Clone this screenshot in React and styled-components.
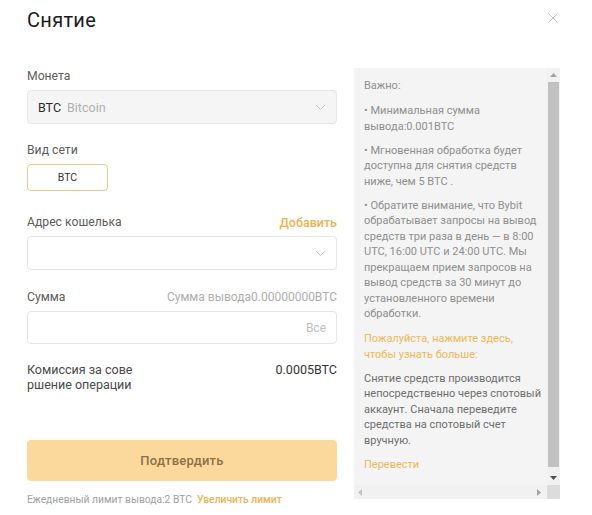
import React from "react";
import styled, { createGlobalStyle } from "styled-components";

const Global = createGlobalStyle`
  html, body {
    margin: 0;
    padding: 0;
    background: #fff;
  }
  body {
    font-family: Roboto, "Noto Sans", Arial, sans-serif;
    -webkit-font-smoothing: antialiased;
  }
  * { box-sizing: border-box; }
`;

const Modal = styled.div`
  width: 592px;
  height: 515px;
  padding: 0 32px 0 27px;
  background: #fff;
  overflow: hidden;
`;

const Header = styled.div`
  height: 68px;
  display: flex;
  justify-content: space-between;
  align-items: flex-start;
  padding-top: 8px;
`;

const Title = styled.h1`
  margin: 0;
  font-size: 20px;
  line-height: 24px;
  font-weight: 400;
  color: #1b1b1f;
  letter-spacing: 0.3px;
`;

const Close = styled.button`
  border: 0;
  background: none;
  padding: 0;
  margin: 5px 2px 0 0;
  width: 10px;
  height: 10px;
  cursor: pointer;
  display: flex;
`;

const Body = styled.div`
  display: flex;
  gap: 17px;
`;

const Form = styled.div`
  width: 310px;
  display: flex;
  flex-direction: column;
`;

const LabelRow = styled.div`
  display: flex;
  justify-content: space-between;
  align-items: center;
  height: 16px;
  margin-bottom: 6px;
  margin-top: ${(p) => p.$top || 0}px;
`;

const Label = styled.span`
  font-size: 12.2px;
  color: #5c5c5c;
`;

const Hint = styled.span`
  font-size: 12px;
  color: #adadad;
`;

const Link = styled.a`
  font-size: ${(p) => p.$size || 12.5}px;
  color: #eab354;
  font-weight: 500;
  text-decoration: none;
  cursor: pointer;
`;

const Field = styled.div`
  height: ${(p) => p.$h || 34}px;
  border: 1px solid #e6e6e6;
  border-radius: 4px;
  background: ${(p) => (p.$muted ? "#f5f5f5" : "#fff")};
  display: flex;
  align-items: center;
  padding: 0 10px;
  gap: 6px;
`;

const Coin = styled.span`
  font-size: 12.5px;
  color: #2a2a2a;
`;

const CoinName = styled.span`
  font-size: 12.5px;
  color: #b0b0b0;
`;

const Spacer = styled.span`
  flex: 1;
`;

const Suffix = styled.span`
  font-size: 12px;
  color: #bdbdbd;
`;

const Chip = styled.button`
  width: 81px;
  height: 27px;
  border: 1px solid #e9c98a;
  border-radius: 4px;
  background: #fff;
  font-family: inherit;
  font-size: 10.5px;
  color: #333;
  padding: 0;
`;

const FeeRow = styled.div`
  display: flex;
  justify-content: space-between;
  align-items: flex-start;
  margin-top: 18px;
  font-size: 12.5px;
  line-height: 15px;
  color: #4a4a4a;
`;

const FeeValue = styled.span`
  color: #333;
`;

const Submit = styled.button`
  margin-top: 48px;
  height: 41px;
  width: 100%;
  border: 0;
  border-radius: 4px;
  background: #fbd99d;
  color: #8c7142;
  font-family: inherit;
  font-size: 13px;
  font-weight: 500;
  letter-spacing: 0.2px;
`;

const Footer = styled.div`
  margin-top: 11px;
  font-size: 10.3px;
  line-height: 16px;
  color: #a0a0a0;
  display: flex;
  gap: 5px;
`;

const Panel = styled.div`
  width: 206px;
  height: 431px;
  background: #f4f4f4;
  display: grid;
  grid-template-columns: 1fr 13px;
  grid-template-rows: 1fr 14px;
`;

const Notes = styled.div`
  padding: 10px 0 0 10px;
  overflow: hidden;
  font-size: 11px;
  line-height: 15.5px;
  color: #8f8f8f;
  white-space: nowrap;
`;

const Para = styled.p`
  margin: ${(p) => p.$mt || 0}px 0 0;
  color: ${(p) => (p.$gold ? "#ecb758" : p.$dark ? "#6e6e6e" : "#8f8f8f")};
`;

const VBar = styled.div`
  background: #f1f1f1;
  display: flex;
  flex-direction: column;
  align-items: center;
`;

const Arrow = styled.div`
  height: ${(p) => p.$h || 14}px;
  width: 100%;
  display: flex;
  align-items: center;
  justify-content: center;
`;

const Thumb = styled.div`
  width: 11px;
  flex: 1;
  background: #c1c1c1;
  margin-bottom: 3px;
`;

const HBar = styled.div`
  background: #f1f1f1;
  display: flex;
  justify-content: space-between;
  align-items: center;
  padding: 0 6px 0 4px;
`;

const Corner = styled.div`
  background: #dcdcdc;
`;

const Tri = ({ dir, color }) => {
  const pts = {
    up: "0,4 3.5,0 7,4",
    down: "0,0 3.5,4 7,0",
    left: "4,0 0,3.5 4,7",
    right: "0,0 4,3.5 0,7",
  }[dir];
  const w = dir === "up" || dir === "down" ? 7 : 4;
  const h = dir === "up" || dir === "down" ? 4 : 7;
  return (
    <svg width={w} height={h} viewBox={`0 0 ${w} ${h}`}>
      <polygon points={pts} fill={color} />
    </svg>
  );
};

const Chevron = () => (
  <svg width="11" height="7" viewBox="0 0 11 7" fill="none">
    <path d="M1 1l4.5 4.5L10 1" stroke="#c4c4c4" strokeWidth="1" />
  </svg>
);

export default function App() {
  return (
    <>
      <Global />
      <Modal>
        <Header>
          <Title>Снятие</Title>
          <Close aria-label="close">
            <svg width="10" height="10" viewBox="0 0 10 10">
              <path d="M0.5 0.5l9 9M9.5 0.5l-9 9" stroke="#c2c2c2" strokeWidth="1" />
            </svg>
          </Close>
        </Header>
        <Body>
          <Form>
            <LabelRow>
              <Label>Монета</Label>
            </LabelRow>
            <Field $muted>
              <Coin>BTC</Coin>
              <CoinName>Bitcoin</CoinName>
              <Spacer />
              <Chevron />
            </Field>

            <LabelRow $top={18}>
              <Label>Вид сети</Label>
            </LabelRow>
            <div>
              <Chip>BTC</Chip>
            </div>

            <LabelRow $top={23}>
              <Label>Адрес кошелька</Label>
              <Link>Добавить</Link>
            </LabelRow>
            <Field>
              <Spacer />
              <Chevron />
            </Field>

            <LabelRow $top={19}>
              <Label>Сумма</Label>
              <Hint>Сумма вывода0.00000000BTC</Hint>
            </LabelRow>
            <Field $h={33}>
              <Spacer />
              <Suffix>Все</Suffix>
            </Field>

            <FeeRow>
              <span>
                Комиссия за сове
                <br />
                ршение операции
              </span>
              <FeeValue>0.0005BTC</FeeValue>
            </FeeRow>

            <Submit>Подтвердить</Submit>
            <Footer>
              <span>Ежедневный лимит вывода:2 BTC</span>
              <Link $size={10.3}>Увеличить лимит</Link>
            </Footer>
          </Form>

          <Panel>
            <Notes>
              <Para>Важно:</Para>
              <Para $mt={9.5}>
                • Минимальная сумма
                <br />
                вывода:0.001BTC
              </Para>
              <Para $mt={8.5}>
                • Мгновенная обработка будет
                <br />
                доступна для снятия средств
                <br />
                ниже, чем 5 BTC .
              </Para>
              <Para $mt={8.5}>
                • Обратите внимание, что Bybit
                <br />
                обрабатывает запросы на вывод
                <br />
                средств три раза в день — в 8:00
                <br />
                UTC, 16:00 UTC и 24:00 UTC. Мы
                <br />
                прекращаем прием запросов на
                <br />
                вывод средств за 30 минут до
                <br />
                установленного времени
                <br />
                обработки.
              </Para>
              <Para $mt={9.5} $gold>
                Пожалуйста, нажмите здесь,
                <br />
                чтобы узнать больше:
              </Para>
              <Para $mt={8.5} $dark>
                Снятие средств производится
                <br />
                непосредственно через спотовый
                <br />
                аккаунт. Сначала переведите
                <br />
                средства на спотовый счет
                <br />
                вручную.
              </Para>
              <Para $mt={8.5} $gold>
                Перевести
              </Para>
            </Notes>
            <VBar>
              <Arrow>
                <Tri dir="up" color="#a3a3a3" />
              </Arrow>
              <Thumb />
              <Arrow $h={15}>
                <Tri dir="down" color="#505050" />
              </Arrow>
            </VBar>
            <HBar>
              <Tri dir="left" color="#c4c4c4" />
              <Tri dir="right" color="#a3a3a3" />
            </HBar>
            <Corner />
          </Panel>
        </Body>
      </Modal>
    </>
  );
}
